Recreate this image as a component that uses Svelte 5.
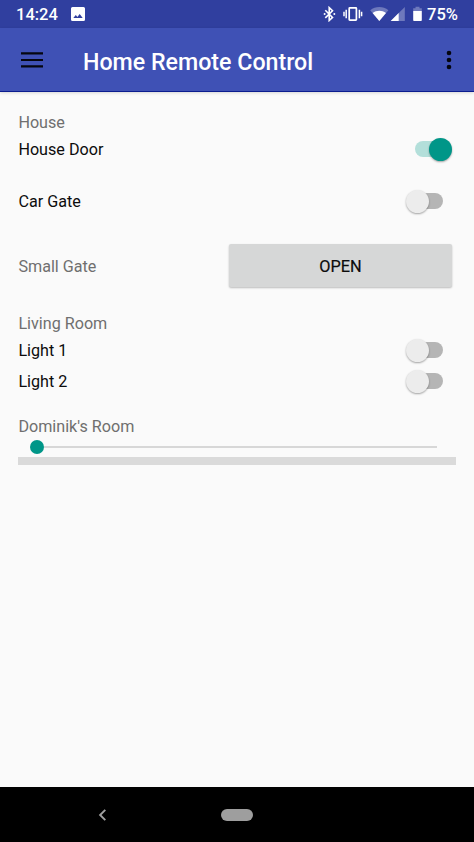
<script>
  let door = $state(true);
  let gate = $state(false);
  let light1 = $state(false);
  let light2 = $state(false);
</script>

{#snippet toggle(on, label, flip)}
  <button class="switch" class:on role="switch" aria-checked={on} aria-label={label} onclick={flip}>
    <span class="thumb"></span>
  </button>
{/snippet}

<div class="screen">
  <div class="status">
    <span class="time">14:24</span>
    <svg class="photo" width="14" height="14" viewBox="0 0 14 14">
      <path fill="#fff" fill-rule="evenodd" d="M1.5 0h11A1.5 1.5 0 0 1 14 1.5v11a1.5 1.5 0 0 1-1.5 1.5h-11A1.5 1.5 0 0 1 0 12.500v-11A1.500 1.500 0 0 1 1.500 0zM2.300 11h9.400L8.700 7 6.400 9.900 4.800 8z" />
    </svg>
    <svg class="icons" width="104" height="16" viewBox="0 0 104 16">
      <g fill="none" stroke="#fff" stroke-width="1.400">
        <path d="M2.300 4.200l7.200 7.200-3.300 3.100V1.600l3.300 3.100-7.200 7.200" stroke-width="1.600" />
        <rect x="26.200" y="1.800" width="7.200" height="12.400" rx=".6" stroke-width="1.700" />
        <path d="M23.200 3.700v8.600M36.400 3.700v8.600M21 5.800v4.400M38.600 5.800v4.400" stroke-width="1.500" />
      </g>
      <circle cx="1.600" cy="8" r="1" fill="#fff" />
      <circle cx="11.300" cy="8" r="1" fill="#fff" />
      <path fill="#fff" opacity=".3" d="M47.200 4.300c5.200-4.300 13-4.300 18.200 0L56.300 15z" />
      <path fill="#fff" d="M49.600 7.100c4-3.100 9.400-3.100 13.400 0L56.300 15z" />
      <path fill="#fff" opacity=".3" d="M81.800 1v14H67.700z" />
      <path fill="#fff" d="M75.700 7v8h-8z" />
      <path fill="#fff" opacity=".3" d="M92.500.8h4v1.500h2.300V5h-8.600V2.300h2.300z" />
      <path fill="#fff" d="M90.200 5h8.600v9.200a.8.800 0 0 1-.8.800h-7a.8.800 0 0 1-.8-.8z" />
    </svg>
    <span class="percent">75%</span>
  </div>

  <header>
    <button class="plain" aria-label="Menu">
      <svg width="22" height="16" viewBox="0 0 22 16"><path fill="#05060f" d="M0 .3h22v2.100H0zM0 6.900h22v2.100H0zM0 13.300h22v2.100H0z" /></svg>
    </button>
    <h1>Home Remote Control</h1>
    <button class="plain more" aria-label="More options">
      <svg width="6" height="20" viewBox="0 0 6 20"><g fill="#05060f"><circle cx="3" cy="3" r="2.300" /><circle cx="3" cy="10" r="2.300" /><circle cx="3" cy="17" r="2.300" /></g></svg>
    </button>
  </header>

  <main>
    <section>
      <h2>House</h2>
      <div class="row"><span>House Door</span>{@render toggle(door, 'House Door', () => (door = !door))}</div>
      <div class="row gate"><span>Car Gate</span>{@render toggle(gate, 'Car Gate', () => (gate = !gate))}</div>
    </section>
    <section class="small">
      <h2>Small Gate</h2>
      <button class="open">OPEN</button>
    </section>
    <section class="living">
      <h2>Living Room</h2>
      <div class="row"><span>Light 1</span>{@render toggle(light1, 'Light 1', () => (light1 = !light1))}</div>
      <div class="row second"><span>Light 2</span>{@render toggle(light2, 'Light 2', () => (light2 = !light2))}</div>
    </section>
    <section class="room">
      <h2>Dominik's Room</h2>
      <div class="slider"><span class="knob"></span><span class="line"></span></div>
      <div class="strip"></div>
    </section>
  </main>

  <nav>
    <button class="plain" aria-label="Back">
      <svg width="8" height="12" viewBox="0 0 8 12"><path fill="none" stroke="#a0a0a0" stroke-width="1.900" d="M7.300 .8L2.100 6 7.300 11.200" /></svg>
    </button>
    <button class="pill" aria-label="Home"></button>
  </nav>
</div>

<style>
  :global(body) {
    margin: 0;
  }
  .screen {
    display: flex;
    flex-direction: column;
    width: 474px;
    height: 842px;
    overflow: hidden;
    background: #fafafa;
    font-family: Roboto, sans-serif;
    font-size: 16.150px;
    color: #0c0c0c;
  }
  button {
    border: 0;
    padding: 0;
    font: inherit;
    color: inherit;
  }
  svg {
    display: block;
  }
  .plain {
    background: none;
  }
  .status {
    display: flex;
    align-items: center;
    height: 28px;
    box-sizing: border-box;
    padding: 0 16px;
    background: #303f9f;
    color: #fff;
    font-size: 16.500px;
    font-weight: 500;
  }
  .time {
    width: 55px;
    line-height: 28px;
    padding-top: 1px;
  }
  .icons {
    margin-left: 238px;
  }
  .percent {
    padding-top: 1px;
  }
  header {
    display: flex;
    align-items: center;
    height: 64px;
    box-sizing: border-box;
    padding: 0 22px 0 21px;
    background: #3f51b5;
    border-bottom: 1px solid #0b1c8f;
    box-shadow: 0 1px 3px rgba(0, 0, 0, 0.15);
    color: #fff;
  }
  h1 {
    margin: 4px 0 0 40px;
    font-size: 23.200px;
    font-weight: 500;
    line-height: 28px;
    white-space: nowrap;
  }
  .more {
    margin-left: auto;
  }
  main {
    flex: 1;
    padding: 18px 18px 0 18.400px;
  }
  h2 {
    margin: 0;
    font-size: inherit;
    font-weight: 400;
    line-height: 26px;
    color: #6f6f6f;
  }
  .row {
    display: flex;
    align-items: center;
    justify-content: space-between;
    height: 26px;
    padding-right: 4.500px;
  }
  .gate {
    margin-top: 26px;
  }
  .second {
    margin-top: 5px;
  }
  .switch {
    display: flex;
    align-items: center;
    width: 46px;
    height: 24px;
    background: none;
    position: relative;
  }
  .switch::before {
    content: '';
    position: absolute;
    left: 9px;
    top: 4px;
    width: 28px;
    height: 16px;
    border-radius: 8px;
    background: #b5b5b5;
  }
  .switch.on::before {
    background: #b3dfda;
  }
  .thumb {
    position: relative;
    width: 23px;
    height: 23px;
    border-radius: 50%;
    background: #ececec;
    box-shadow: 0 1px 2px rgba(0, 0, 0, 0.35);
  }
  .on {
    justify-content: flex-end;
  }
  .on .thumb {
    background: #009688;
  }
  .small {
    display: flex;
    align-items: center;
    justify-content: space-between;
    margin-top: 30px;
    padding-right: 4px;
    height: 43px;
  }
  .small h2 {
    padding-top: 2px;
  }
  .open {
    width: 223px;
    height: 43px;
    border-radius: 2px;
    background: #d6d7d7;
    box-shadow: 0 1px 2px rgba(0, 0, 0, 0.25);
    font-size: 16.300px;
    padding-top: 1px;
    -webkit-text-stroke: 0.2px #0c0c0c;
  }
  .living {
    margin-top: 24px;
  }
  .room {
    margin-top: 20px;
  }
  .slider {
    display: flex;
    align-items: center;
    height: 14px;
    padding: 0 19px 0 11.600px;
  }
  .knob {
    width: 14px;
    height: 14px;
    border-radius: 50%;
    background: #009688;
  }
  .line {
    flex: 1;
    height: 2px;
    background: #d7d7d7;
  }
  .strip {
    height: 8px;
    margin-top: 3px;
    background: #dadada;
  }
  nav {
    display: flex;
    align-items: center;
    height: 55px;
    padding-left: 98px;
    background: #000;
  }
  .pill {
    width: 32px;
    height: 12px;
    margin-left: 115px;
    border-radius: 6px;
    background: #9e9e9e;
  }
</style>
